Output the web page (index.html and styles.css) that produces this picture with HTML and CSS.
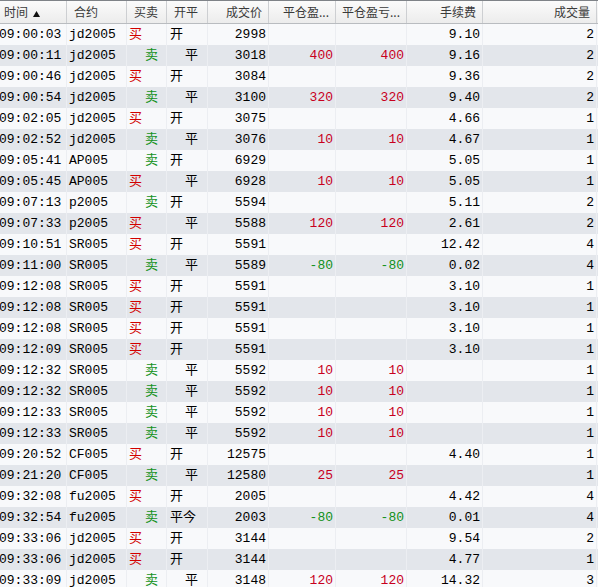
FILE: index.html
```html
<!DOCTYPE html>
<html lang="zh-CN">
<head>
<meta charset="utf-8">
<title>成交记录</title>
<link rel="stylesheet" href="styles.css">
</head>
<body>
<div class="viewport">
  <div class="grid">
    <div class="row head">
      <div class="c l">时间<svg class="sort" width="7" height="6" viewBox="0 0 7 6"><path d="M3.5 0 L7 6 L0 6 Z" fill="#111"/></svg></div>
      <div class="c l">合约</div>
      <div class="c l">买卖</div>
      <div class="c l">开平</div>
      <div class="c r">成交价</div>
      <div class="c r">平仓盈...</div>
      <div class="c r">平仓盈亏...</div>
      <div class="c r">手续费</div>
      <div class="c r">成交量</div>
      <div class="c"></div>
    </div>

    <div class="row"><div class="c l">09:00:03</div><div class="c l">jd2005</div><div class="c l buy">买</div><div class="c l open">开</div><div class="c r">2998</div><div class="c r"></div><div class="c r"></div><div class="c r">9.10</div><div class="c r">2</div><div class="c"></div></div>
    <div class="row alt"><div class="c l">09:00:11</div><div class="c l">jd2005</div><div class="c l sell">卖</div><div class="c l close">平</div><div class="c r">3018</div><div class="c r up">400</div><div class="c r up">400</div><div class="c r">9.16</div><div class="c r">2</div><div class="c"></div></div>
    <div class="row"><div class="c l">09:00:46</div><div class="c l">jd2005</div><div class="c l buy">买</div><div class="c l open">开</div><div class="c r">3084</div><div class="c r"></div><div class="c r"></div><div class="c r">9.36</div><div class="c r">2</div><div class="c"></div></div>
    <div class="row alt"><div class="c l">09:00:54</div><div class="c l">jd2005</div><div class="c l sell">卖</div><div class="c l close">平</div><div class="c r">3100</div><div class="c r up">320</div><div class="c r up">320</div><div class="c r">9.40</div><div class="c r">2</div><div class="c"></div></div>
    <div class="row"><div class="c l">09:02:05</div><div class="c l">jd2005</div><div class="c l buy">买</div><div class="c l open">开</div><div class="c r">3075</div><div class="c r"></div><div class="c r"></div><div class="c r">4.66</div><div class="c r">1</div><div class="c"></div></div>
    <div class="row alt"><div class="c l">09:02:52</div><div class="c l">jd2005</div><div class="c l sell">卖</div><div class="c l close">平</div><div class="c r">3076</div><div class="c r up">10</div><div class="c r up">10</div><div class="c r">4.67</div><div class="c r">1</div><div class="c"></div></div>
    <div class="row"><div class="c l">09:05:41</div><div class="c l">AP005</div><div class="c l sell">卖</div><div class="c l open">开</div><div class="c r">6929</div><div class="c r"></div><div class="c r"></div><div class="c r">5.05</div><div class="c r">1</div><div class="c"></div></div>
    <div class="row alt"><div class="c l">09:05:45</div><div class="c l">AP005</div><div class="c l buy">买</div><div class="c l close">平</div><div class="c r">6928</div><div class="c r up">10</div><div class="c r up">10</div><div class="c r">5.05</div><div class="c r">1</div><div class="c"></div></div>
    <div class="row"><div class="c l">09:07:13</div><div class="c l">p2005</div><div class="c l sell">卖</div><div class="c l open">开</div><div class="c r">5594</div><div class="c r"></div><div class="c r"></div><div class="c r">5.11</div><div class="c r">2</div><div class="c"></div></div>
    <div class="row alt"><div class="c l">09:07:33</div><div class="c l">p2005</div><div class="c l buy">买</div><div class="c l close">平</div><div class="c r">5588</div><div class="c r up">120</div><div class="c r up">120</div><div class="c r">2.61</div><div class="c r">2</div><div class="c"></div></div>
    <div class="row"><div class="c l">09:10:51</div><div class="c l">SR005</div><div class="c l buy">买</div><div class="c l open">开</div><div class="c r">5591</div><div class="c r"></div><div class="c r"></div><div class="c r">12.42</div><div class="c r">4</div><div class="c"></div></div>
    <div class="row alt"><div class="c l">09:11:00</div><div class="c l">SR005</div><div class="c l sell">卖</div><div class="c l close">平</div><div class="c r">5589</div><div class="c r down">-80</div><div class="c r down">-80</div><div class="c r">0.02</div><div class="c r">4</div><div class="c"></div></div>
    <div class="row"><div class="c l">09:12:08</div><div class="c l">SR005</div><div class="c l buy">买</div><div class="c l open">开</div><div class="c r">5591</div><div class="c r"></div><div class="c r"></div><div class="c r">3.10</div><div class="c r">1</div><div class="c"></div></div>
    <div class="row alt"><div class="c l">09:12:08</div><div class="c l">SR005</div><div class="c l buy">买</div><div class="c l open">开</div><div class="c r">5591</div><div class="c r"></div><div class="c r"></div><div class="c r">3.10</div><div class="c r">1</div><div class="c"></div></div>
    <div class="row"><div class="c l">09:12:08</div><div class="c l">SR005</div><div class="c l buy">买</div><div class="c l open">开</div><div class="c r">5591</div><div class="c r"></div><div class="c r"></div><div class="c r">3.10</div><div class="c r">1</div><div class="c"></div></div>
    <div class="row alt"><div class="c l">09:12:09</div><div class="c l">SR005</div><div class="c l buy">买</div><div class="c l open">开</div><div class="c r">5591</div><div class="c r"></div><div class="c r"></div><div class="c r">3.10</div><div class="c r">1</div><div class="c"></div></div>
    <div class="row"><div class="c l">09:12:32</div><div class="c l">SR005</div><div class="c l sell">卖</div><div class="c l close">平</div><div class="c r">5592</div><div class="c r up">10</div><div class="c r up">10</div><div class="c r"></div><div class="c r">1</div><div class="c"></div></div>
    <div class="row alt"><div class="c l">09:12:32</div><div class="c l">SR005</div><div class="c l sell">卖</div><div class="c l close">平</div><div class="c r">5592</div><div class="c r up">10</div><div class="c r up">10</div><div class="c r"></div><div class="c r">1</div><div class="c"></div></div>
    <div class="row"><div class="c l">09:12:33</div><div class="c l">SR005</div><div class="c l sell">卖</div><div class="c l close">平</div><div class="c r">5592</div><div class="c r up">10</div><div class="c r up">10</div><div class="c r"></div><div class="c r">1</div><div class="c"></div></div>
    <div class="row alt"><div class="c l">09:12:33</div><div class="c l">SR005</div><div class="c l sell">卖</div><div class="c l close">平</div><div class="c r">5592</div><div class="c r up">10</div><div class="c r up">10</div><div class="c r"></div><div class="c r">1</div><div class="c"></div></div>
    <div class="row"><div class="c l">09:20:52</div><div class="c l">CF005</div><div class="c l buy">买</div><div class="c l open">开</div><div class="c r">12575</div><div class="c r"></div><div class="c r"></div><div class="c r">4.40</div><div class="c r">1</div><div class="c"></div></div>
    <div class="row alt"><div class="c l">09:21:20</div><div class="c l">CF005</div><div class="c l sell">卖</div><div class="c l close">平</div><div class="c r">12580</div><div class="c r up">25</div><div class="c r up">25</div><div class="c r"></div><div class="c r">1</div><div class="c"></div></div>
    <div class="row"><div class="c l">09:32:08</div><div class="c l">fu2005</div><div class="c l buy">买</div><div class="c l open">开</div><div class="c r">2005</div><div class="c r"></div><div class="c r"></div><div class="c r">4.42</div><div class="c r">4</div><div class="c"></div></div>
    <div class="row alt"><div class="c l">09:32:54</div><div class="c l">fu2005</div><div class="c l sell">卖</div><div class="c l open">平今</div><div class="c r">2003</div><div class="c r down">-80</div><div class="c r down">-80</div><div class="c r">0.01</div><div class="c r">4</div><div class="c"></div></div>
    <div class="row"><div class="c l">09:33:06</div><div class="c l">jd2005</div><div class="c l buy">买</div><div class="c l open">开</div><div class="c r">3144</div><div class="c r"></div><div class="c r"></div><div class="c r">9.54</div><div class="c r">2</div><div class="c"></div></div>
    <div class="row alt"><div class="c l">09:33:06</div><div class="c l">jd2005</div><div class="c l buy">买</div><div class="c l open">开</div><div class="c r">3144</div><div class="c r"></div><div class="c r"></div><div class="c r">4.77</div><div class="c r">1</div><div class="c"></div></div>
    <div class="row"><div class="c l">09:33:09</div><div class="c l">jd2005</div><div class="c l sell">卖</div><div class="c l close">平</div><div class="c r">3148</div><div class="c r up">120</div><div class="c r up">120</div><div class="c r">14.32</div><div class="c r">3</div><div class="c"></div></div>
  </div>
</div>
</body>
</html>
```

FILE: styles.css
```css
html, body {
  margin: 0;
  padding: 0;
  background: #f8f9fb;
}

.viewport {
  width: 598px;
  height: 587px;
  overflow: hidden;
}

.grid {
  margin-left: -3px;
  width: 720px;
}

.row {
  display: grid;
  grid-template-columns: 70px 60px 40px 41px 61px 67px 71px 76px 114px 120px;
  height: 21px;
  background: #f8f9fb;
  font-family: "Liberation Mono", "Noto Sans CJK SC", monospace;
  font-size: 13px;
  color: #000;
}

.row.alt {
  background: #e3e6eb;
}

.c {
  box-sizing: border-box;
  height: 21px;
  line-height: 21px;
  white-space: nowrap;
  overflow: hidden;
  border-right: 1px solid #eceef2;
  padding: 0 2px;
}

.c.l { text-align: left; }
.c.r { text-align: right; }

.buy { color: #d20000; }
.sell { color: #12911a; padding-left: 18px; }
.open { padding-left: 3px; }
.close { padding-left: 18px; }
.up { color: #c8001e; }
.down { color: #12911a; }

.head {
  height: 24px;
  box-sizing: border-box;
  border-top: 1px solid #7f8388;
  border-bottom: 1px solid #b9bcc0;
  background: linear-gradient(#fbfbfb, #ececec);
  font-family: "Noto Sans CJK SC", "Noto Sans", sans-serif;
  font-size: 12px;
  color: #3a3a3a;
}

.head .c {
  height: 22px;
  line-height: 22px;
  border-right: 1px solid #cdcfd2;
}

.head .c.l { padding-left: 7px; }
.head .c.r { padding-right: 6px; }

.sort {
  margin-left: 5px;
  vertical-align: 0px;
}
```
